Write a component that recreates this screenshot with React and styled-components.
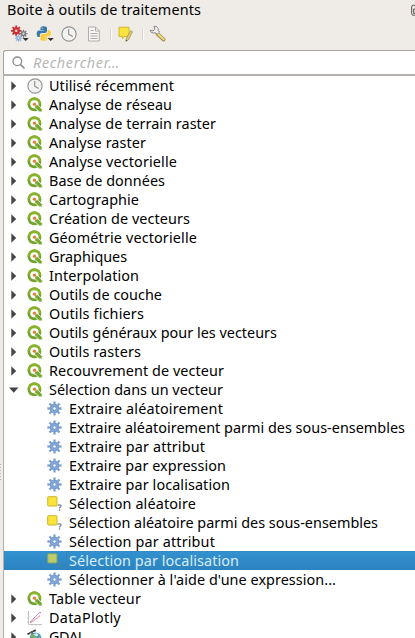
import React, { useLayoutEffect, useRef, useState } from "react";
import styled, { createGlobalStyle, css } from "styled-components";

const Global = createGlobalStyle`
  * { box-sizing: border-box; }
  body { margin: 0; background: #efebe7; overflow: hidden; }
`;

const Panel = styled.div`
  position: relative;
  width: 415px;
  height: 638px;
  overflow: hidden;
  display: flex;
  flex-direction: column;
  background: #efebe7;
  color: #000;
  font-family: "Noto Sans", "Open Sans", sans-serif;
  font-size: 14.4px;
`;

const TitleBar = styled.header`
  display: flex;
  align-items: center;
  justify-content: space-between;
  height: 19px;
  padding-left: 7px;
  flex: none;
`;

const DockButton = styled.svg`
  width: 4px;
  height: 12px;
  flex: none;
`;

const Toolbar = styled.div`
  display: flex;
  align-items: center;
  height: 31px;
  padding: 0 0 1px 10px;
  flex: none;
`;

const Tool = styled.span`
  display: flex;
  width: ${(p) => p.$width}px;
  height: 20px;
  align-items: center;
`;

const Separator = styled.i`
  width: 1px;
  height: 11px;
  background: #d8d5d1;
  box-shadow: 1px 0 #fbfaf8;
  margin-right: ${(p) => p.$gap}px;
`;

const SearchBox = styled.div`
  display: flex;
  align-items: center;
  gap: 7px;
  height: 25px;
  margin-left: 3px;
  padding: 0 0 1px 8px;
  flex: none;
  background: #fff;
  border: 1px solid #a6a29e;
  border-right: 0;
  border-bottom: 0;
  border-radius: 3px 0 0 2px;
  color: #b8b6b4;
  font-style: italic;
`;

const Tree = styled.div`
  flex: 1;
  min-height: 0;
  margin: -1px 0 0 3px;
  background: #fff;
  border-top: 2px solid #b3afac;
  border-left: 1px solid #b3afac;
  overflow: hidden;
`;

const Grip = styled.svg`
  position: absolute;
  left: 0;
  top: 464px;
  width: 2px;
  height: 16px;
`;

const Row = styled.div`
  display: flex;
  align-items: center;
  height: 19px;
  padding-left: ${(p) => (p.$child ? 43 : 5)}px;
  ${(p) =>
    p.$selected &&
    css`
      background: linear-gradient(#3292cf, #2c83c0);
      color: #d9ecf8;
    `}
`;

const Arrow = styled.span`
  display: flex;
  width: 18px;
  height: 16px;
  align-items: center;
`;

const IconSlot = styled.span`
  display: flex;
  width: 22px;
  height: 16px;
  flex: none;
`;

const Text = styled.span`
  display: inline-block;
  white-space: pre;
  line-height: 19px;
  height: 19px;
`;

const Focus = styled.span`
  display: flex;
  height: 19px;
  ${(p) =>
    p.$on &&
    css`
      flex: 1;
      margin-left: -3px;
      padding-left: 3px;
      box-shadow: inset 1px 0 #397fb0, inset 0 1px #3789c3;
    `}
`;

/* Text whose tracking is adjusted so that it fills the given width. */
function Label({ width, children }) {
  const ref = useRef(null);
  const [spacing, setSpacing] = useState(0);
  useLayoutEffect(() => {
    const natural = ref.current.getBoundingClientRect().width;
    setSpacing((width - natural) / children.length);
  }, [width, children]);
  return (
    <Text ref={ref} style={{ letterSpacing: spacing }}>
      {children}
    </Text>
  );
}

const cog = (cx, cy, r, inner, teeth) => {
  const pts = [];
  for (let i = 0; i < teeth; i++) {
    const a = (i * 2 * Math.PI) / teeth;
    const w = Math.PI / teeth;
    [[-0.6, inner], [-0.42, r], [0.42, r], [0.6, inner]].forEach(([k, d]) =>
      pts.push(
        `${(cx + d * Math.sin(a + k * w)).toFixed(2)},${(cy - d * Math.cos(a + k * w)).toFixed(2)}`
      )
    );
  }
  return pts.join(" ");
};

const Clock = () => (
  <svg width="16" height="16" viewBox="0 0 16 16">
    <circle cx="8" cy="8" r="7.1" fill="#f3f3f2" stroke="#929292" strokeWidth="1.1" />
    <path d="M7.7 3v5.2l4 2.2" fill="none" stroke="#8a8a8a" strokeWidth="1.1" />
  </svg>
);

const QLogo = () => (
  <svg width="16" height="16" viewBox="0 0 16 16">
    <circle cx="7.4" cy="7.4" r="6.9" fill="#72a32d" />
    <path d="M.7 7A6.7 6.7 0 0 1 14.1 7z" fill="#8ab32c" />
    <circle cx="7.4" cy="7.3" r="4.1" fill="#fff" />
    <path d="M7.800 7.800h3.200l4.200 4.500v2.600h-2.900L7.800 10.400z" fill="#79a832" stroke="#fff" strokeWidth="0.8" />
    <circle cx="7.500" cy="7.200" r="1.600" fill="#ee7935" />
  </svg>
);

const Gear = () => (
  <svg width="16" height="16" viewBox="0 0 16 16">
    <polygon points={cog(7.5, 7.5, 7.2, 4.4, 8)} fill="#7a9fd1" />
    <circle cx="7.5" cy="7.5" r="4.300" fill="#83a8d9" stroke="#6f96ca" strokeWidth="0.900" />
    <circle cx="7.5" cy="7.5" r="1.800" fill="#f3f7fc" stroke="#6c92c5" strokeWidth="0.900" />
  </svg>
);

const Select = () => (
  <svg width="16" height="16" viewBox="0 0 16 16">
    <rect x="0.7" y="0.7" width="9.3" height="9.3" rx="0.8" fill="#fbe33d" stroke="#cdb52d" />
    <path d="M11 9.700c.3-1.200 3.100-1.300 3 .4 0 1-1.500 1-1.500 2.400M12.500 13.300v1.500" fill="none" stroke="#6e879e" strokeWidth="1.3" />
  </svg>
);

const SelectLocation = () => (
  <svg width="16" height="16" viewBox="0 0 16 16">
    <rect x="0.7" y="0.7" width="9.3" height="9.3" rx="0.8" fill="#bdcb69" stroke="#7da273" />
    <path d="M12.1 14.4c-1-1.9-1.8-2.7-1.8-3.7a1.8 1.8 0 0 1 3.6 0c0 1-.8 1.8-1.8 3.7z" fill="none" stroke="#5485a3" strokeWidth="1" />
  </svg>
);

const Plot = () => (
  <svg width="16" height="16" viewBox="0 0 16 16">
    <path d="M1.5 1v13.5H15M0 4h2M0 8h2M0 12h2M5 14v1.5M9 14v1.5M13 14v1.5" fill="none" stroke="#b4b7bd" strokeWidth="0.8" />
    <path d="M3 12c3-1 3-4 5-5s2-4 6-4.5" fill="none" stroke="#ad79bd" strokeWidth="1" />
    <path d="M3 12.5c4-.5 4-3.5 6-3.7s2-2.5 4-3" fill="none" stroke="#ef7892" strokeWidth="1" />
  </svg>
);

const Globe = () => (
  <svg width="18" height="16" viewBox="0 0 18 16">
    <circle cx="8.500" cy="9.500" r="6" fill="#459bc9" />
    <path d="M4 6l4-1.800 2.500 2-1.500 3-2-.3 1 3-1.700 2L4 11 2.800 8zM11.500 7l2.800 2-.8 4-2.300-2.200z" fill="#72ad72" />
    <path d="M6.500 5.500l3-1.500 2 2-2 1.500z" fill="#d9edf3" />
    <path d="M0 4.500l2.800-1.200.8 1.400L.8 6zM5.500 1.800L8.300.3l.9 1.600-2.900 1.400z" fill="#343b40" />
    <path d="M2 4.500l5-2.500" stroke="#444" strokeWidth="1" />
    <path d="M3.500 2.300l2-.5.700 2.500L4.700 5.300z" fill="#555" />
  </svg>
);

const Cogs = () => (
  <svg width="20" height="18" viewBox="0 0 20 18">
    <polygon points={cog(6.2, 5.8, 5.3, 3.5, 8)} fill="#cc2e31" />
    <circle cx="6.2" cy="5.8" r="3.6" fill="#cc2e31" />
    <circle cx="6.2" cy="5.8" r="1.3" fill="#f2dcd8" />
    <polygon points={cog(13.5, 8.7, 4, 2.600, 8)} fill="#777b80" />
    <circle cx="13.5" cy="8.7" r="1.100" fill="#e9e9e7" />
    <polygon points={cog(8.5, 13.2, 3.600, 2.400, 8)} fill="#91b2dc" />
    <circle cx="8.5" cy="13.2" r="0.900" fill="#d5e1f0" />
    <path d="M12.500 13h6.300l-3.100 3z" fill="#302f2e" />
  </svg>
);

const Python = () => (
  <svg width="20" height="18" viewBox="0 0 20 18">
    <path d="M4.500 5V3c0-1.200 1.200-1.800 3.200-1.800S11 1.900 11 3v3.100c0 1.300-.8 2-2 2H6c-1.400 0-2.200.8-2.200 2.200V12H2.600C1.200 12 .7 10.600.7 8.800S1.400 5.600 2.800 5.600h5V5z" fill="#3979aa" />
    <path d="M11 11.900v2c0 1.200-1.300 1.800-3.300 1.800s-3.300-.8-3.300-1.800v-3c0-1.300.8-2 2-2h3c1.400 0 2.300-.8 2.300-2.200V5h1.200c1.400 0 1.900 1.500 1.900 3.200s-.7 3.200-2 3.200H7.800v.5z" fill="#fbcb3e" />
    <circle cx="6.200" cy="3.100" r=".7" fill="#d8e4ec" />
    <circle cx="9.400" cy="13.900" r=".7" fill="#fff1c4" />
    <path d="M11.500 13h6.300l-3.100 3z" fill="#302f2e" />
  </svg>
);

const Page = () => (
  <svg width="14" height="16" viewBox="0 0 14 16">
    <path d="M1.500 1h7l3.800 3.800V15H1.500z" fill="#f8f7f5" stroke="#aeacaa" />
    <path d="M8.500 1v4h4" fill="none" stroke="#aeacaa" />
    <path d="M3.500 4.500h3M3.500 7.500h7M3.500 10h7M3.500 12.500h7" stroke="#aaa8a6" />
  </svg>
);

const Edit = () => (
  <svg width="16" height="16" viewBox="0 0 16 16">
    <path d="M1 1.200h10v9.300H6l-1.500 2.400V10.500H1z" fill="#fbe33d" stroke="#d1b82d" />
    <path d="M12.500 4.700l2 1-4 8-2.600 1.600.4-3z" fill="#dccc7b" stroke="#a29654" strokeWidth=".8" />
    <path d="M7.800 15.500l.3-1.700 1.200.6z" fill="#444" />
  </svg>
);

const Wrench = () => (
  <svg width="18" height="18" viewBox="0 0 18 18">
    <path d="M8.300 8.800l6.400 5.700" stroke="#9c8c4e" strokeWidth="3.700" strokeLinecap="round" />
    <path d="M8.500 8.800l6.200 5.500" stroke="#f3d777" strokeWidth="2.200" strokeLinecap="round" />
    <path d="M1.200 5.200l2.800.7 1.800-1.700-.8-2.800c2.700-.5 4.800 1.400 4.200 4.100l1.500 1.500-2.500 2.400-1.700-1.600C3.800 8.400 1.300 7.700 1.200 5.200z" fill="#efefed" stroke="#858585" strokeWidth="1" />
  </svg>
);

const Magnifier = () => (
  <svg width="14" height="14" viewBox="0 0 14 14">
    <circle cx="5.300" cy="5.300" r="4.300" fill="none" stroke="#8b8989" strokeWidth="1.300" />
    <path d="M8.500 8.500l4 4" stroke="#8b8989" strokeWidth="1.700" />
  </svg>
);

const Triangle = ({ open }) => (
  <svg width="10" height="10" viewBox="0 0 10 10">
    <path d={open ? "M0 2.500h9.500L4.750 7.700z" : "M2.300 .3v9.400L7.200 5z"} fill="#454545" />
  </svg>
);

const icons = { clock: Clock, q: QLogo, gear: Gear, select: Select, location: SelectLocation, plot: Plot, globe: Globe };

const rows = [
  ["Utilisé récemment", 125, "clock"],
  ["Analyse de réseau", 123, "q"],
  ["Analyse de terrain raster", 167, "q"],
  ["Analyse raster", 97, "q"],
  ["Analyse vectorielle", 128, "q"],
  ["Base de données", 116, "q"],
  ["Cartographie", 90, "q"],
  ["Création de vecteurs", 141, "q"],
  ["Géométrie vectorielle", 148, "q"],
  ["Graphiques", 78, "q"],
  ["Interpolation", 90, "q"],
  ["Outils de couche", 113, "q"],
  ["Outils fichiers", 95, "q"],
  ["Outils généraux pour les vecteurs", 228, "q"],
  ["Outils rasters", 92, "q"],
  ["Recouvrement de vecteur", 175, "q"],
  ["Sélection dans un vecteur", 174, "q", "open"],
  ["Extraire aléatoirement", 154, "gear", "child"],
  ["Extraire aléatoirement parmi des sous-ensembles", 336, "gear", "child"],
  ["Extraire par attribut", 136, "gear", "child"],
  ["Extraire par expression", 157, "gear", "child"],
  ["Extraire par localisation", 161, "gear", "child"],
  ["Sélection aléatoire", 127, "select", "child"],
  ["Sélection aléatoire parmi des sous-ensembles", 309, "select", "child"],
  ["Sélection par attribut", 146, "gear", "child"],
  ["Sélection par localisation", 170, "location", "selected"],
  ["Sélectionner à l'aide d'une expression...", 267, "gear", "child"],
  ["Table vecteur", 92, "q"],
  ["DataPlotly", 72, "plot"],
  ["GDAL", 36, "globe"],
];

function TreeItem({ name, width, icon, kind }) {
  const selected = kind === "selected";
  const child = selected || kind === "child";
  const Icon = icons[icon];
  return (
    <Row $child={child} $selected={selected}>
      {!child && (
        <Arrow>
          <Triangle open={kind === "open"} />
        </Arrow>
      )}
      <IconSlot>
        <Icon />
      </IconSlot>
      <Focus $on={selected}>
        <Label width={width}>{name}</Label>
      </Focus>
    </Row>
  );
}

export default function App() {
  return (
    <>
      <Global />
      <Panel>
        <TitleBar>
          <Label width={194}>Boite à outils de traitements</Label>
          <DockButton viewBox="0 0 4 12">
            <path d="M4 1.200H2.500Q.7 1.200 .7 3v6.500q0 1.800 1.800 1.800H4M4 5H2.700v4.500H4" fill="none" stroke="#55514e" />
          </DockButton>
        </TitleBar>
        <Toolbar>
          <Tool $width={26}><Cogs /></Tool>
          <Tool $width={25}><Python /></Tool>
          <Tool $width={26}><Clock /></Tool>
          <Tool $width={23}><Page /></Tool>
          <Separator $gap={7} />
          <Tool $width={24}><Edit /></Tool>
          <Separator $gap={6} />
          <Tool $width={20}><Wrench /></Tool>
        </Toolbar>
        <SearchBox>
          <Magnifier />
          <Label width={87}>Rechercher…</Label>
        </SearchBox>
        <Tree>
          {rows.map(([name, width, icon, kind]) => (
            <TreeItem key={name} name={name} width={width} icon={icon} kind={kind} />
          ))}
        </Tree>
        <Grip viewBox="0 0 2 16">
          <path d="M.5 0v16" stroke="#b5b1ad" strokeDasharray="1 2" />
        </Grip>
      </Panel>
    </>
  );
}
